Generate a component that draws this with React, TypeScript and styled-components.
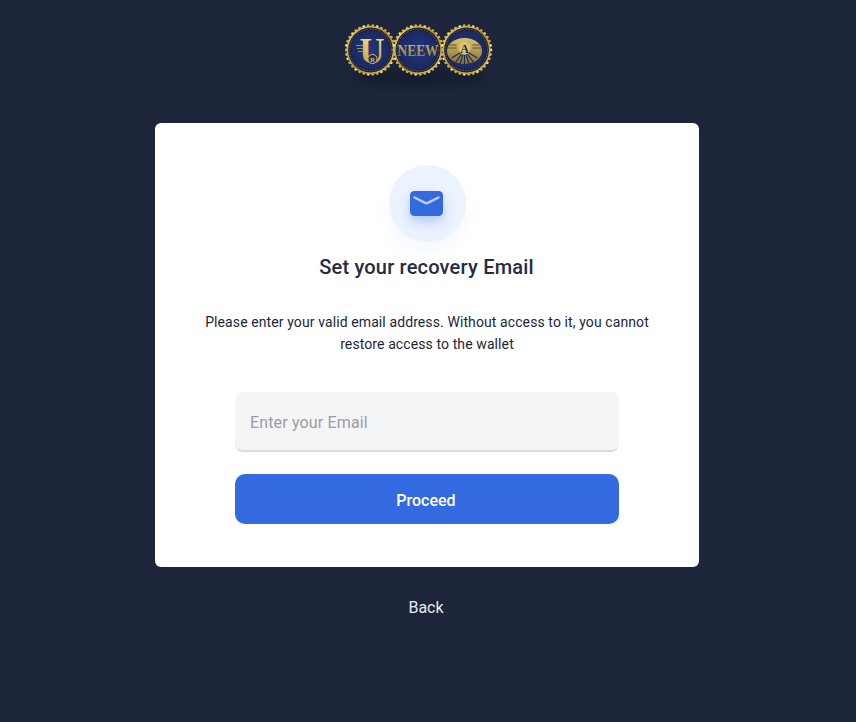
import React from 'react';
import styled, { createGlobalStyle } from 'styled-components';

const GlobalStyle = createGlobalStyle`
    html, body {
        margin: 0;
        padding: 0;
        height: 100%;
        background: #1c2539;
    }
    * {
        box-sizing: border-box;
    }
`;

function Coin({ cx, children }: { cx: number; children: React.ReactNode }) {
    const cy = 28;
    const teeth = Array.from({ length: 34 }, (_, i) => {
        const a = (i / 34) * Math.PI * 2;
        return { x: cx + Math.cos(a) * 24.4, y: cy + Math.sin(a) * 24.4 };
    });
    return (
        <g>
            {teeth.map((t, i) => (
                <circle key={i} cx={t.x} cy={t.y} r={1.4} fill={i % 3 === 0 ? '#f7e08a' : '#d2aa42'} />
            ))}
            <circle cx={cx} cy={cy} r={24} fill="url(#goldRing)" />
            <circle cx={cx} cy={cy} r={22.4} fill="#131a36" />
            <circle cx={cx} cy={cy} r={20.9} fill="none" stroke="#6f6a4e" strokeWidth={1.2} strokeDasharray="0.8 0.8" />
            <circle cx={cx} cy={cy} r={19.8} fill="url(#coinBlue)" />
            {children}
        </g>
    );
}

function Logo() {
    const rays = [-58, -36, -18, 0, 18, 36, 58];
    return (
        <LogoSvg viewBox="0 0 164 70" width={164} height={70}>
            <defs>
                <linearGradient id="goldRing" x1="0" y1="0" x2="1" y2="1">
                    <stop offset="0" stopColor="#f7df80" />
                    <stop offset="0.5" stopColor="#b48c2e" />
                    <stop offset="1" stopColor="#eccb62" />
                </linearGradient>
                <linearGradient id="goldText" x1="0" y1="0" x2="0" y2="1">
                    <stop offset="0" stopColor="#d9c273" />
                    <stop offset="1" stopColor="#86702e" />
                </linearGradient>
                <linearGradient id="goldBright" x1="0" y1="0" x2="0" y2="1">
                    <stop offset="0" stopColor="#f8e596" />
                    <stop offset="1" stopColor="#bb9232" />
                </linearGradient>
                <radialGradient id="coinBlue">
                    <stop offset="0" stopColor="#25357a" />
                    <stop offset="1" stopColor="#1b2960" />
                </radialGradient>
            </defs>
            <ellipse cx={74} cy={56} rx={66} ry={8} fill="#10172a" opacity={0.55} filter="blur(5px)" />
            <Coin cx={25.5}>
                <path d="M11 23.5h7M12 26.5h6M13 29.5h5" stroke="#c9a544" strokeWidth={0.8} />
                <CoinLetter x={27} y={41} fontSize={36} textLength={25} lengthAdjust="spacingAndGlyphs" $bright>U</CoinLetter>
                <circle cx={27.5} cy={37} r={4.6} fill="#1b2960" stroke="#e3c05a" strokeWidth={1} />
                <CoinLetter x={27.5} y={39.6} fontSize={7} $bright>R</CoinLetter>
            </Coin>
            <Coin cx={73}>
                <CoinLetter x={73} y={33.5} fontSize={17} textLength={41} lengthAdjust="spacingAndGlyphs">NEEW</CoinLetter>
            </Coin>
            <Coin cx={121.5}>
                <ellipse cx={119.5} cy={29} rx={17.5} ry={13} fill="url(#goldText)" />
                {rays.map((r) => (
                    <path
                        key={r}
                        d="M119.5 33V43"
                        transform={`rotate(${r} 119.5 28)`}
                        stroke="#1b2960"
                        strokeWidth={1.2}
                    />
                ))}
                <path d="M102.5 26h9M103.5 23h8M127.5 26h9M127.5 23h8" stroke="#5f4f1f" strokeWidth={0.9} />
                <circle cx={119.5} cy={26} r={6.2} fill="#dcc26c" />
                <CoinLetter x={119.5} y={30.5} fontSize={12} $dark>A</CoinLetter>
            </Coin>
        </LogoSvg>
    );
}

export default function App() {
    return (
        <Page>
            <GlobalStyle />
            <Logo />
            <Card>
                <IconCircle>
                    <EnvelopeIcon viewBox="0 0 33 25" width={33} height={25}>
                        <rect width={33} height={25} rx={4.5} fill="#336ae0" />
                        <path
                            d="M4.5 6.5l10.7 5.4c.8.4 1.8.4 2.6 0L28.5 6.5"
                            fill="none"
                            stroke="#bccef3"
                            strokeWidth={2.4}
                            strokeLinecap="round"
                            strokeLinejoin="round"
                        />
                    </EnvelopeIcon>
                </IconCircle>
                <Title>Set your recovery Email</Title>
                <Description>
                    Please enter your valid email address. Without access to it, you cannot
                    <br />
                    restore access to the wallet
                </Description>
                <EmailInput type="text" placeholder="Enter your Email" />
                <ProceedButton type="button">Proceed</ProceedButton>
            </Card>
            <BackLink>Back</BackLink>
        </Page>
    );
}

const Page = styled.div`
    width: 854px;
    min-height: 722px;
    display: flex;
    flex-direction: column;
    align-items: center;
    padding-top: 22px;
    font-family: Roboto, "Liberation Sans", sans-serif;
`;

const LogoSvg = styled.svg`
    display: block;
    margin-bottom: 31px;
`;

const CoinLetter = styled.text<{ $dark?: boolean; $bright?: boolean }>`
    fill: ${(p) => (p.$dark ? '#1b2960' : p.$bright ? 'url(#goldBright)' : 'url(#goldText)')};
    font-family: "Liberation Serif", serif;
    font-weight: 700;
    text-anchor: middle;
`;

const Card = styled.div`
    width: 544px;
    height: 444px;
    background: #fff;
    border-radius: 6px;
    padding-top: 42px;
    display: flex;
    flex-direction: column;
    align-items: center;
`;

const IconCircle = styled.div`
    width: 77px;
    height: 77px;
    border-radius: 50%;
    background: #ebf3fe;
    box-shadow: 0 10px 16px rgba(235, 243, 254, 0.55);
    display: flex;
    align-items: center;
    justify-content: center;
    padding-right: 1px;
`;

const EnvelopeIcon = styled.svg`
    display: block;
    filter: drop-shadow(0 6px 6px rgba(51, 106, 224, 0.3));
`;

const Title = styled.h1`
    margin: 12px 1px 0 0;
    font-size: 20px;
    line-height: 26px;
    font-weight: 500;
    letter-spacing: 0.2px;
    color: #242c41;
`;

const Description = styled.p`
    margin: 31px 0 0;
    font-size: 14px;
    line-height: 22px;
    text-align: center;
    letter-spacing: 0.1px;
    color: #1c2539;
`;

const EmailInput = styled.input`
    width: 384px;
    height: 60px;
    margin-top: 37px;
    padding: 3px 15px 0;
    border: 0;
    border-bottom: 2px solid #d9dce1;
    border-radius: 8px;
    background: #f4f5f7;
    font-family: inherit;
    font-size: 16px;
    letter-spacing: 0.15px;
    outline: none;

    &::placeholder {
        color: #9a9da3;
        opacity: 1;
    }
`;

const ProceedButton = styled.button`
    width: 384px;
    height: 50px;
    margin-top: 22px;
    padding: 2px 2px 0 0;
    border: 0;
    border-radius: 10px;
    background: #336ae0;
    color: #fff;
    font-family: inherit;
    font-size: 16px;
    font-weight: 500;
`;

const BackLink = styled.a`
    margin: 29px 2px 0 0;
    font-size: 16px;
    line-height: 24px;
    color: #e6e9ef;
`;
